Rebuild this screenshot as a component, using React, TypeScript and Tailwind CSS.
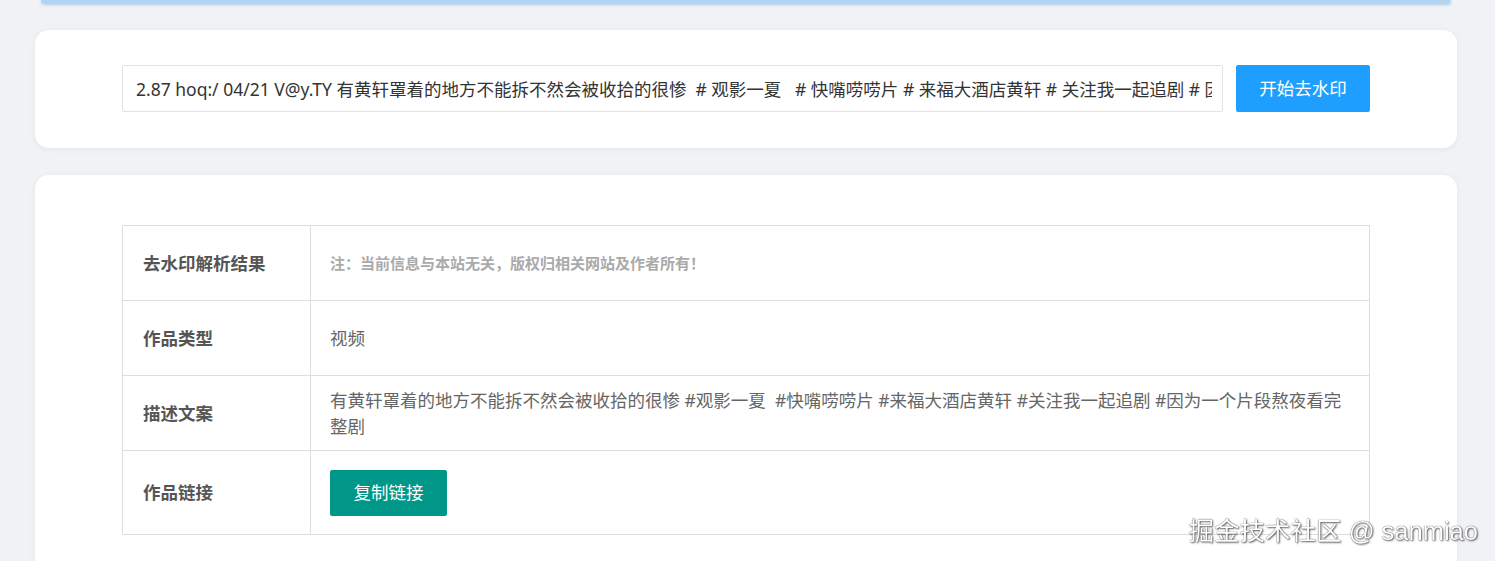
import { useState } from 'react'

const shareText =
  '2.87 hoq:/ 04/21 V@y.TY 有黄轩罩着的地方不能拆不然会被收拾的很惨  # 观影一夏   # 快嘴唠唠片 # 来福大酒店黄轩 # 关注我一起追剧 # 因为一个片段熬夜看完整剧  https://v.douyin.com/'

const font = { fontFamily: '"Noto Sans", "Noto Sans CJK SC", sans-serif' }

export default function App() {
  const [url, setUrl] = useState(shareText)

  return (
    <div className="min-h-screen bg-[#f0f2f5] pl-[35px] pr-[38px]" style={font}>
      {/* bottom edge of the header card */}
      <div className="mx-[6px] h-[4px] rounded-b-[6px] bg-[#b3d5f4] shadow-[0_1px_3px_rgba(120,170,220,0.5)]" />

      {/* input card */}
      <div className="mt-[26px] flex items-center gap-[13px] rounded-[14px] bg-white px-[87px] pt-[35px] pb-[36px] shadow-[0_1px_6px_rgba(0,0,0,0.06)]">
        <input
          value={url}
          onChange={e => setUrl(e.target.value)}
          className="h-[47px] min-w-0 flex-1 rounded-[2px] border border-[#e2e2e2] bg-white pl-[13px] pr-[10px] text-[17.5px] text-[#333] outline-none"
        />
        <button className="h-[47px] w-[134px] shrink-0 rounded-[2px] bg-[#1e9fff] text-[17.5px] text-white">
          开始去水印
        </button>
      </div>

      {/* result card */}
      <div className="mt-[27px] rounded-[14px] bg-white px-[87px] pt-[50px] pb-[60px] shadow-[0_1px_6px_rgba(0,0,0,0.06)]">
        <table className="w-full border-collapse text-[17.5px]">
          <tbody>
            <tr className="h-[75px]">
              <td className="w-[188px] border border-[#dedede] px-[20px] font-bold text-[#555]">去水印解析结果</td>
              <td className="border border-[#dedede] px-[19px] text-[15px] font-bold text-[#aaa]">
                注：当前信息与本站无关，版权归相关网站及作者所有！
              </td>
            </tr>
            <tr className="h-[75px]">
              <td className="border border-[#dedede] px-[20px] font-bold text-[#555]">作品类型</td>
              <td className="border border-[#dedede] px-[19px] text-[#666]">视频</td>
            </tr>
            <tr className="h-[75px]">
              <td className="border border-[#dedede] px-[20px] font-bold text-[#555]">描述文案</td>
              <td className="border border-[#dedede] px-[19px] leading-[26px] text-[#666]">
                有黄轩罩着的地方不能拆不然会被收拾的很惨 #观影一夏&nbsp; #快嘴唠唠片 #来福大酒店黄轩 #关注我一起追剧 #因为一个片段熬夜看完整剧
              </td>
            </tr>
            <tr className="h-[84px]">
              <td className="border border-[#dedede] px-[20px] font-bold text-[#555]">作品链接</td>
              <td className="border border-[#dedede] px-[19px]">
                <button className="h-[46px] w-[117px] rounded-[2px] bg-[#009688] text-[17.5px] text-white">复制链接</button>
              </td>
            </tr>
          </tbody>
        </table>
      </div>

      {/* site watermark */}
      <div
        className="fixed bottom-[14px] right-[17px] text-[25.5px] leading-[32px] text-white [text-shadow:0_0_1px_rgba(0,0,0,0.9),1px_1px_2px_rgba(0,0,0,0.6)]"
        style={{ fontFamily: '"Liberation Sans", "Noto Sans CJK SC", sans-serif' }}
      >
        掘金技术社区 @ sanmiao
      </div>
    </div>
  )
}
